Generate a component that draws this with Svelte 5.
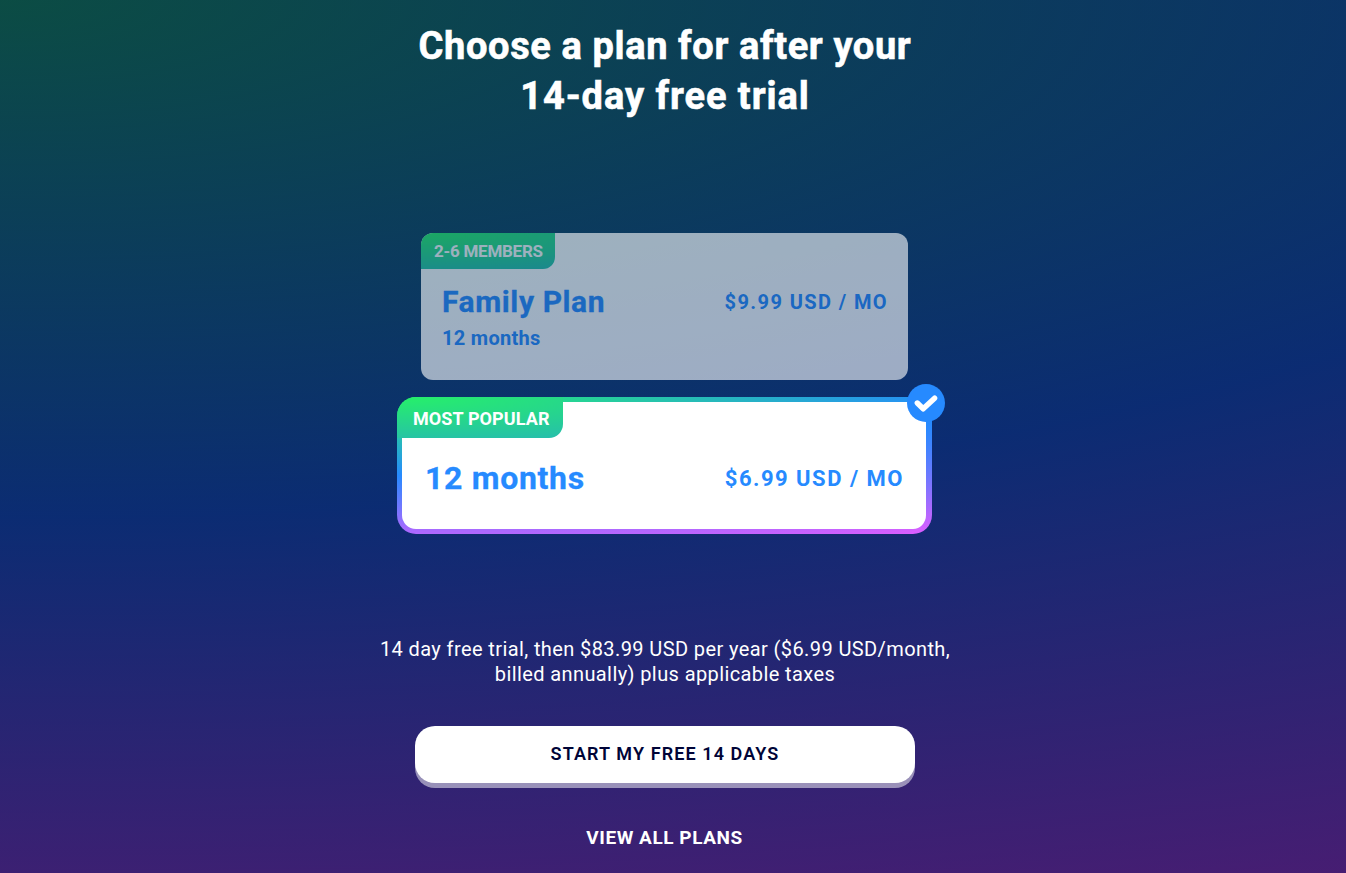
<script>
  let selected = $state("popular");

  const plans = [
    { id: "family", tag: "2-6 MEMBERS", title: "Family Plan", length: "12 months", price: "$9.99 USD / MO" },
    { id: "popular", tag: "MOST POPULAR", title: "12 months", price: "$6.99 USD / MO" }
  ];
</script>

<main>
  <h1>Choose a plan for after your<br /><span>14-day free trial</span></h1>

  <div class="plans">
    {#each plans as plan (plan.id)}
      <button class="plan {plan.id}" class:selected={selected === plan.id} onclick={() => (selected = plan.id)}>
        <span class="tag">{plan.tag}</span>
        <span class="row">
          <span class="title">{plan.title}</span>
          <span class="price">{plan.price}</span>
        </span>
        {#if plan.length}
          <span class="length">{plan.length}</span>
        {/if}
        {#if selected === plan.id}
          <svg class="check" viewBox="0 0 38 38">
            <circle cx="19" cy="19" r="19" fill="#268aff" />
            <path d="M10.3 19L16.2 24.8L27.6 14.2" fill="none" stroke="#fff" stroke-width="5.4" stroke-linecap="round" stroke-linejoin="round" />
          </svg>
        {/if}
      </button>
    {/each}
  </div>

  <p>
    14 day free trial, then $83.99 USD per year ($6.99 USD/month,<br />
    billed annually) plus applicable taxes
  </p>

  <button class="start">START MY FREE 14 DAYS</button>
  <button class="all">VIEW ALL PLANS</button>
</main>

<style>
  :global(body) {
    margin: 0;
  }

  main {
    box-sizing: border-box;
    height: 873px;
    padding: 21px 16px 0 0;
    display: flex;
    flex-direction: column;
    align-items: center;
    overflow: hidden;
    color: #fff;
    font-family: Roboto, "Liberation Sans", sans-serif;
    background: linear-gradient(rgba(0, 4, 55, 0.7), rgba(0, 4, 55, 0.7)),
      radial-gradient(260% 113% at 0% 0%, #26f663 0%, #268aff 52.5%, #fc55ff 100%);
  }

  h1 {
    margin: 0;
    font-size: 38px;
    line-height: 50px;
    font-weight: 700;
    letter-spacing: 0.62px;
    text-align: center;
    white-space: nowrap;
    -webkit-text-stroke: 0.6px #fff;
  }

  h1 span {
    letter-spacing: 0.95px;
  }

  button {
    border: none;
    padding: 0;
    background: none;
    font-family: inherit;
    cursor: pointer;
  }

  .plans {
    display: flex;
    flex-direction: column;
    align-items: center;
    gap: 17px;
    margin: 112px 1px 0 0;
  }

  .plan {
    position: relative;
    box-sizing: border-box;
    display: flex;
    flex-direction: column;
    align-items: stretch;
    width: 487px;
    height: 147px;
    border-radius: 12px;
    background: #fff;
    color: #268aff;
    font-weight: 700;
    text-align: left;
    white-space: nowrap;
    opacity: 0.6;
  }

  .plan.popular {
    width: 535px;
    height: 137px;
  }

  .plan.selected {
    border: 5px solid transparent;
    border-right-width: 6px;
    border-radius: 19px;
    opacity: 1;
    background: linear-gradient(#fff, #fff) padding-box,
      radial-gradient(226% 123% at 0% 0%, #26f663 0%, #268aff 46.5%, #fc55ff 100%) border-box;
  }

  .tag {
    box-sizing: border-box;
    align-self: flex-start;
    width: 134px;
    height: 36px;
    padding-left: 13px;
    border-radius: 12px 0 12px 0;
    background: radial-gradient(240% 125% at 0% 0%, #26f069 0%, #26b9b3 100%);
    color: #fff;
    font-size: 17px;
    line-height: 37px;
    letter-spacing: -0.25px;
  }

  .popular .tag {
    width: 166px;
    height: 41px;
    margin: -5px 0 0 -5px;
    padding-left: 16px;
    border-radius: 19px 0 14px 0;
    font-size: 18px;
    line-height: 43px;
    letter-spacing: 0.1px;
  }

  .row {
    display: flex;
    justify-content: space-between;
    align-items: center;
    height: 40px;
    margin: 13px 20px 0 21px;
  }

  .popular .row {
    margin: 20px 22px 0 23px;
  }

  .title {
    font-size: 30px;
    letter-spacing: 0.6px;
    -webkit-text-stroke: 0.3px #268aff;
  }

  .family .title {
    margin-top: -2px;
  }

  .popular .title {
    font-size: 32px;
    letter-spacing: 0.7px;
  }

  .price {
    font-size: 20px;
    letter-spacing: 1.4px;
  }

  .popular .price {
    font-size: 22px;
    letter-spacing: 1.5px;
  }

  .length {
    margin: 4px 21px 0;
    font-size: 20px;
    line-height: 24px;
    letter-spacing: 0.3px;
  }

  .check {
    position: absolute;
    top: -18px;
    right: -19px;
    width: 38px;
    height: 38px;
  }

  p {
    margin: 103px 0 0;
    font-size: 20px;
    line-height: 25px;
    letter-spacing: 0.4px;
    text-align: center;
    white-space: nowrap;
  }

  .start {
    width: 500px;
    height: 57px;
    flex: none;
    margin-top: 39px;
    padding-bottom: 2px;
    border-radius: 20px;
    background: #fff;
    box-shadow: 0 5px 0 rgba(255, 255, 255, 0.5);
    color: #000437;
    font-size: 18px;
    font-weight: 600;
    letter-spacing: 1.1px;
  }

  .all {
    margin: 43px 1px 0 0;
    color: #fff;
    font-size: 19px;
    line-height: 24px;
    font-weight: 700;
    letter-spacing: 0.55px;
  }
</style>
